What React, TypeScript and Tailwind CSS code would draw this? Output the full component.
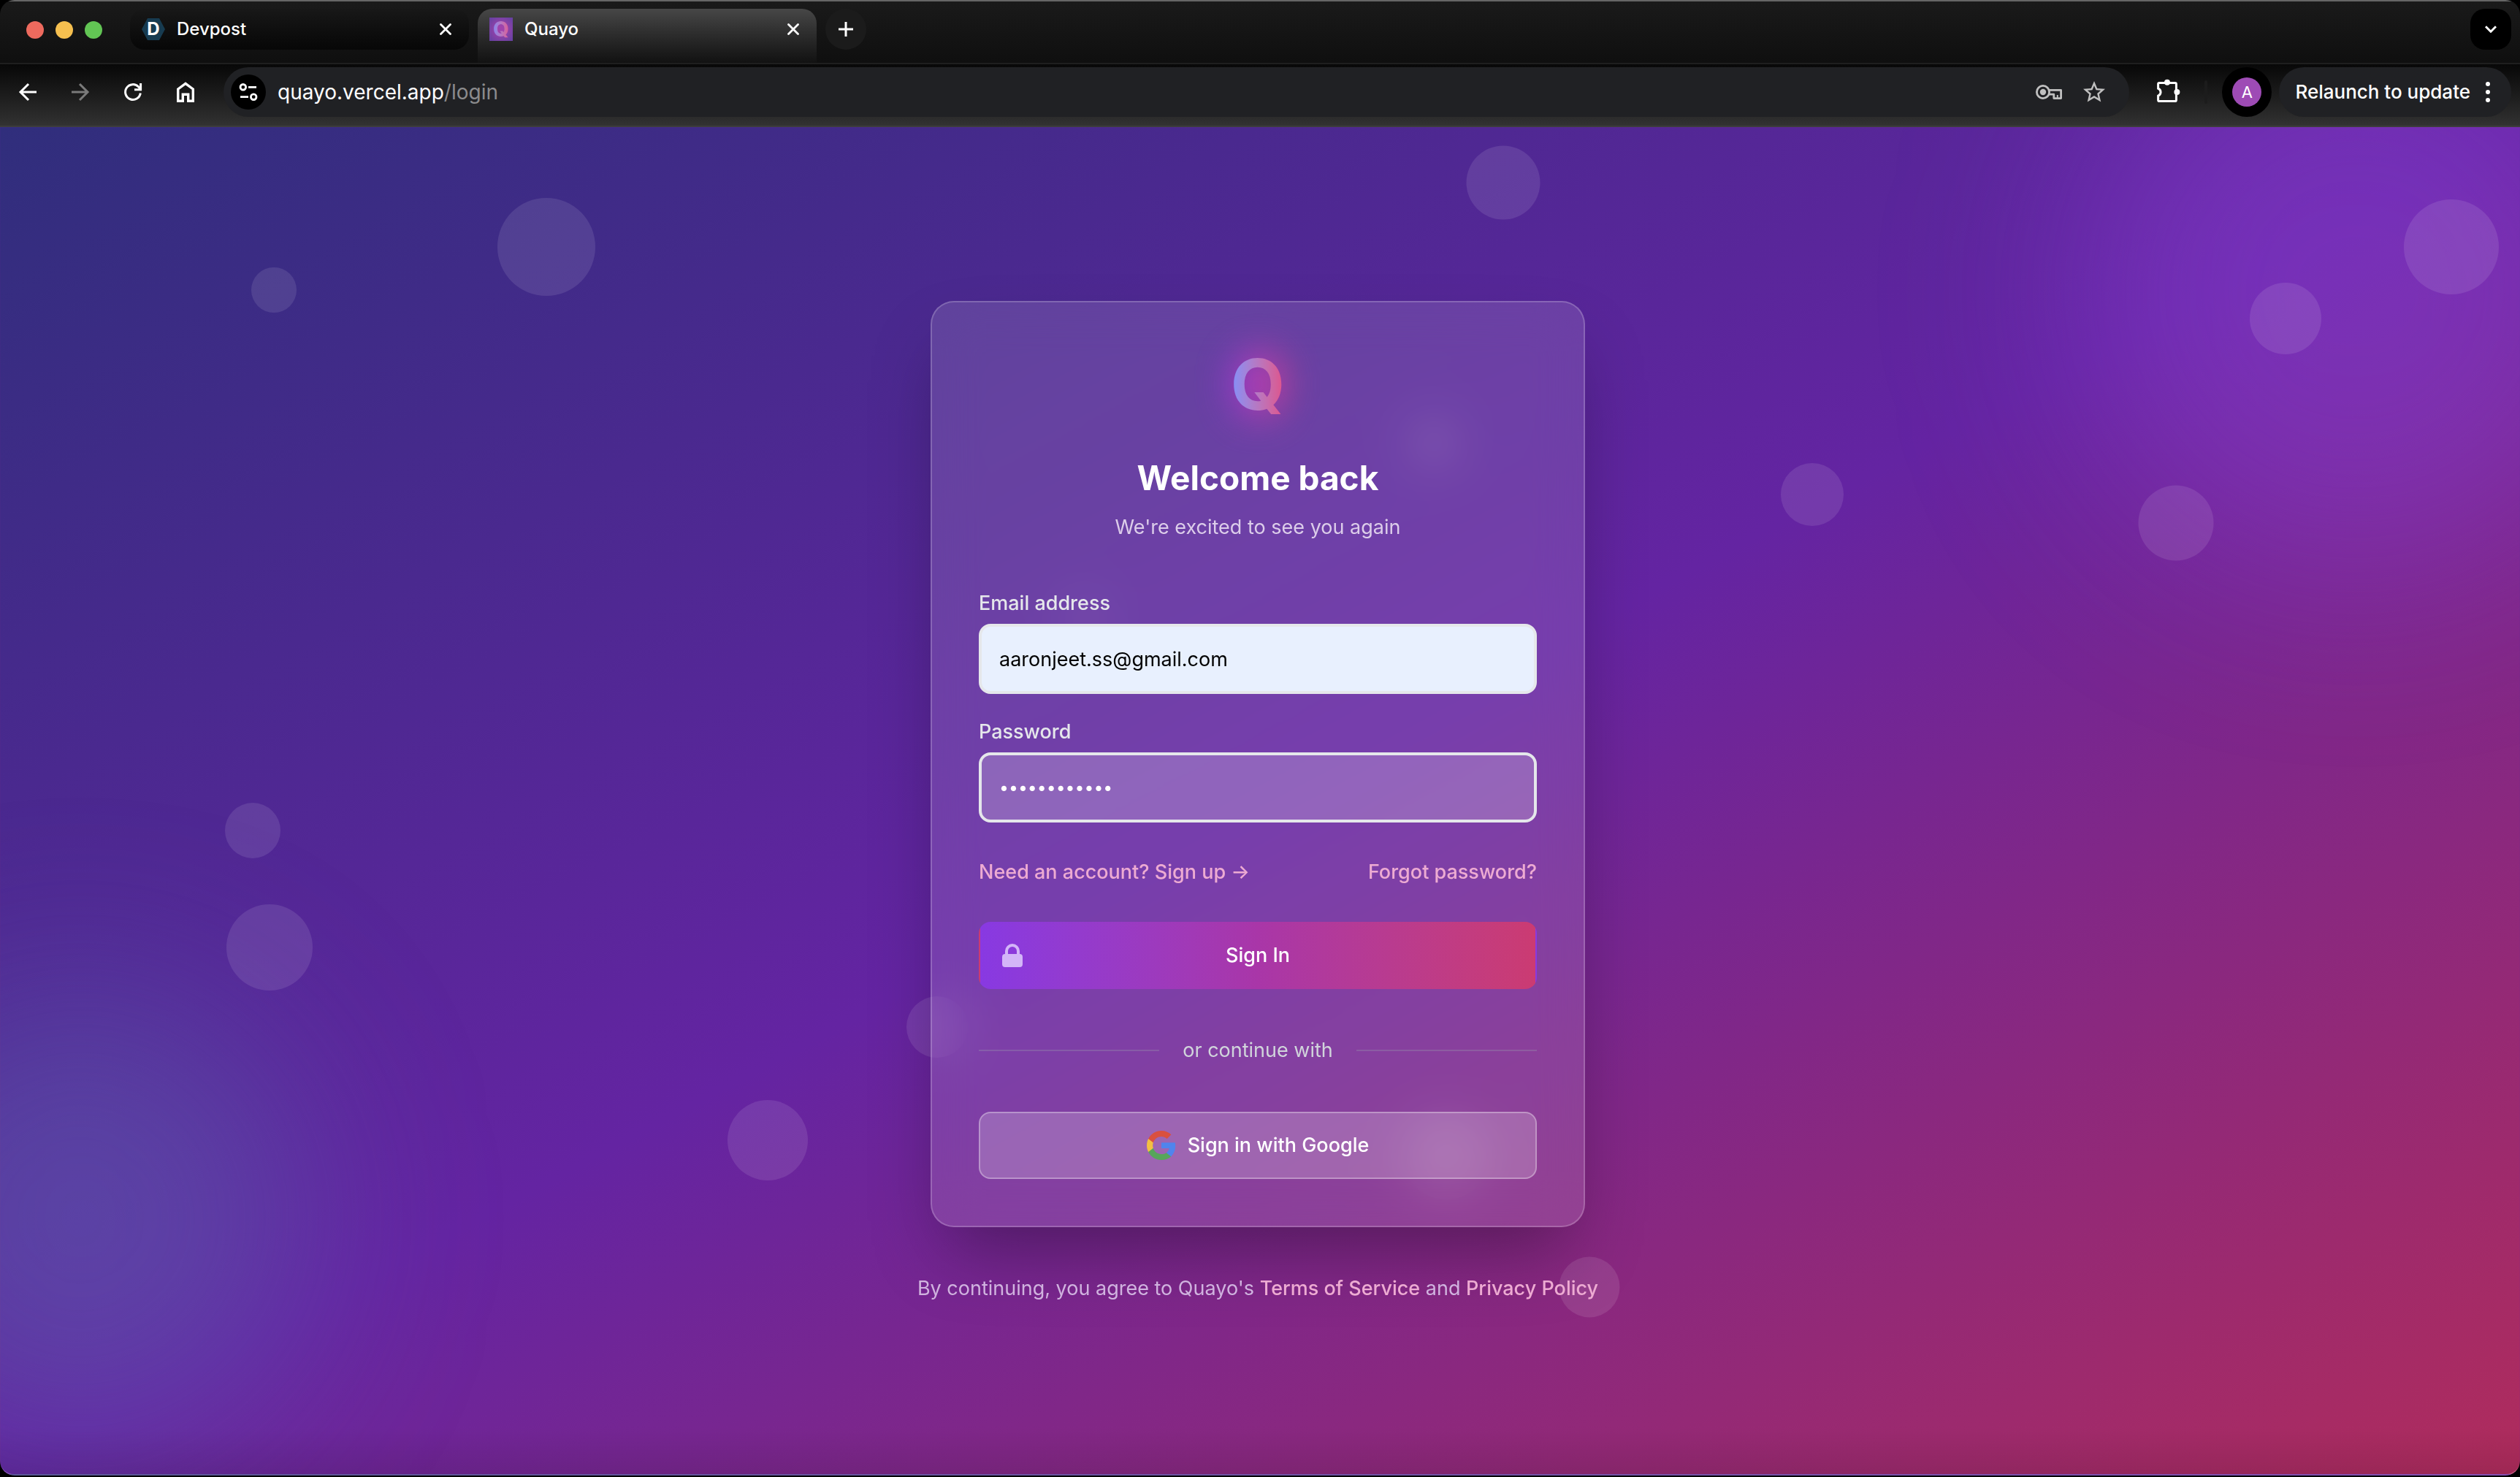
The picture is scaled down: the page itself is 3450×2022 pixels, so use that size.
import React from 'react';

const bubbles = [
    { x: 21.68, y: 8.9, size: 134 },
    { x: 10.87, y: 12.1, size: 62 },
    { x: 59.65, y: 4.1, size: 101 },
    { x: 97.28, y: 8.9, size: 130 },
    { x: 90.7, y: 14.2, size: 98 },
    { x: 71.9, y: 27.3, size: 86 },
    { x: 86.35, y: 29.4, size: 103 },
    { x: 10.04, y: 52.2, size: 76 },
    { x: 10.7, y: 60.9, size: 118 },
    { x: 30.46, y: 75.2, size: 110 },
    { x: 37.2, y: 66.8, size: 84 },
    { x: 63.07, y: 86.1, size: 83 },
    { x: 56.87, y: 23.4, size: 74 },
    { x: 43.1, y: 36.4, size: 52 },
    { x: 57.4, y: 76.4, size: 118 },
];

interface IconProps {
    className?: string;
}

const CloseIcon: React.FC<IconProps> = ({ className }) => (
    <svg className={className} viewBox="0 0 16 16" fill="none" stroke="currentColor" strokeWidth="2.8" strokeLinecap="round">
        <path d="M1.5 1.5l13 13M14.5 1.5l-13 13" />
    </svg>
);

const ArrowIcon: React.FC<IconProps> = ({ className }) => (
    <svg className={className} viewBox="0 0 28 28" fill="none" stroke="currentColor" strokeWidth="3">
        <path d="M26 14H4M15 3L4 14l11 11" />
    </svg>
);

const ReloadIcon: React.FC<IconProps> = ({ className }) => (
    <svg className={className} viewBox="0 0 28 28" fill="none" stroke="currentColor" strokeWidth="3">
        <path d="M24.3 15.5A10.4 10.4 0 1 1 21.5 6.8L24 9.5" />
        <path d="M24.6 2v8.8H16" />
    </svg>
);

const HomeIcon: React.FC<IconProps> = ({ className }) => (
    <svg className={className} viewBox="0 0 28 32" fill="none" stroke="currentColor" strokeWidth="3.4">
        <path d="M3.7 28.3V12L14 4.4 24.3 12v16.3h-6.6v-9h-7.4v9z" />
    </svg>
);

const SiteIcon: React.FC<IconProps> = ({ className }) => (
    <svg className={className} viewBox="0 0 28 28" fill="none" stroke="currentColor" strokeWidth="2.8">
        <circle cx="6.8" cy="7.3" r="3.8" />
        <path d="M14 7.3h11M3 20.7h11" />
        <circle cx="21.2" cy="20.7" r="3.8" />
    </svg>
);

const KeyIcon: React.FC<IconProps> = ({ className }) => (
    <svg className={className} viewBox="0 0 40 24" fill="none" stroke="currentColor" strokeWidth="2.8">
        <circle cx="12" cy="12" r="8.6" />
        <circle cx="12" cy="12" r="4.2" fill="currentColor" stroke="none" />
        <path d="M20 9.4h16.6v11.2h-9.8v-5.4H20" strokeLinejoin="round" />
        <path d="M31.8 16v4" strokeWidth="2" />
    </svg>
);

const StarIcon: React.FC<IconProps> = ({ className }) => (
    <svg className={className} viewBox="0 0 24 24" fill="currentColor">
        <path d="M22 9.24l-7.19-.62L12 2 9.19 8.63 2 9.24l5.46 4.73L5.82 21 12 17.27 18.18 21l-1.63-7.03L22 9.24zM12 15.4l-3.76 2.27 1-4.28-3.32-2.88 4.38-.38L12 6.1l1.71 4.04 4.38.38-3.32 2.88 1 4.28L12 15.4z" />
    </svg>
);

const PuzzleIcon: React.FC<IconProps> = ({ className }) => (
    <svg className={className} viewBox="0 0 36 36" fill="none">
        <path
            d="M4.6 13.2V7a1.6 1.6 0 0 1 1.6-1.6h21.6A1.6 1.6 0 0 1 29.4 7v22a1.6 1.6 0 0 1-1.6 1.6H6.2A1.6 1.6 0 0 1 4.6 29v-5.8c4.6-2 4.6-8 0-10z"
            stroke="currentColor"
            strokeWidth="3"
        />
        <circle cx="17" cy="4.8" r="4" fill="currentColor" />
        <circle cx="30.4" cy="18" r="4" fill="currentColor" />
    </svg>
);

const LockIcon: React.FC<IconProps> = ({ className }) => (
    <svg className={className} viewBox="0 0 20 20" fill="currentColor">
        <path fillRule="evenodd" clipRule="evenodd" d="M5 9V7a5 5 0 0110 0v2a2 2 0 012 2v5a2 2 0 01-2 2H5a2 2 0 01-2-2v-5a2 2 0 012-2zm8-2v2H7V7a3 3 0 016 0z" />
    </svg>
);

const GoogleIcon: React.FC<IconProps> = ({ className }) => (
    <svg className={className} viewBox="2 2 44 44">
        <path fill="#5084ed" d="M45.12 24.5c0-1.56-.14-3.06-.4-4.5H24v8.51h11.84c-.51 2.75-2.06 5.08-4.39 6.64v5.52h7.11c4.16-3.83 6.56-9.47 6.56-16.17z" />
        <path fill="#57a65a" d="M24 46c5.94 0 10.92-1.97 14.56-5.33l-7.11-5.52c-1.97 1.32-4.49 2.1-7.45 2.1-5.73 0-10.58-3.87-12.31-9.07H4.34v5.7C7.96 41.07 15.4 46 24 46z" />
        <path fill="#f2bf42" d="M11.69 28.18C11.25 26.86 11 25.45 11 24s.25-2.86.69-4.18v-5.7H4.34C2.85 17.09 2 20.45 2 24s.85 6.91 2.34 9.88l7.35-5.7z" />
        <path fill="#d9503f" d="M24 10.75c3.23 0 6.13 1.11 8.41 3.29l6.31-6.31C34.91 4.18 29.93 2 24 2 15.4 2 7.96 6.93 4.34 14.12l7.35 5.7c1.73-5.2 6.58-9.07 12.31-9.07z" />
    </svg>
);

const TabStrip: React.FC = () => (
    <div className="flex items-start h-[86px] pt-[10px] pl-9 pr-3 border-t-2 border-[#666666] bg-linear-to-b from-[#1a1a1a] to-[#0f0f0f]">
        <div className="flex items-center gap-4 h-[58px] w-[142px]">
            <span className="size-6 rounded-full bg-[#ed6a5e]" />
            <span className="size-6 rounded-full bg-[#f5bf4f]" />
            <span className="size-6 rounded-full bg-[#62c554]" />
        </div>
        <div className="flex items-center w-[464px] h-14 pl-4 pr-6 rounded-[20px] bg-linear-to-b from-[#181818] to-[#070707]">
            <span className="flex items-center justify-center w-8 h-[30px] bg-[#173b50] text-[24px] leading-none font-bold [clip-path:polygon(25%_0,75%_0,100%_50%,75%_100%,25%_100%,0_50%)]">D</span>
            <span className="ml-4 flex-1 text-[24px] leading-8 font-medium">Devpost</span>
            <button aria-label="Close Devpost tab">
                <CloseIcon className="size-4" />
            </button>
        </div>
        <div className="flex items-start w-[464px] h-[74px] ml-3 pt-3 pl-4 pr-6 rounded-t-[20px] bg-linear-to-b from-[#474747] to-[#121212]">
            <span className="flex items-center justify-center size-8 bg-[radial-gradient(circle,#a042ac_20%,#6841a2_90%)]">
                <span className="text-[28px] leading-none font-extrabold text-transparent bg-clip-text bg-linear-to-r from-[#8687ee] to-[#dc5a93]">Q</span>
            </span>
            <span className="ml-4 flex-1 text-[24px] leading-8 font-medium">Quayo</span>
            <button aria-label="Close Quayo tab" className="mt-2">
                <CloseIcon className="size-4" />
            </button>
        </div>
        <button aria-label="New tab" className="flex items-center justify-center size-14 ml-3 rounded-full bg-[#1b1b1b]">
            <svg className="size-5" viewBox="0 0 20 20" fill="none" stroke="currentColor" strokeWidth="3">
                <path d="M10 0v20M0 10h20" />
            </svg>
        </button>
        <button aria-label="Search tabs" className="flex items-center justify-center size-14 ml-auto rounded-[20px] bg-black">
            <svg className="w-4 h-[10px]" viewBox="0 0 16 10" fill="none" stroke="currentColor" strokeWidth="3">
                <path d="M1 1.2l7 7 7-7" />
            </svg>
        </button>
    </div>
);

const Toolbar: React.FC = () => (
    <div className="flex items-center h-[88px] pb-3 pl-6 pr-3 pt-1 border-y-2 border-t-[#1f1f1f] border-b-[#3c3c3c] bg-linear-to-b from-[#080808] to-[#323232]">
        <div className="flex items-center gap-11">
            <button aria-label="Back">
                <ArrowIcon className="size-7" />
            </button>
            <button aria-label="Forward" className="text-[#7a7a7a]">
                <ArrowIcon className="size-7 rotate-180" />
            </button>
            <button aria-label="Reload">
                <ReloadIcon className="size-7" />
            </button>
            <button aria-label="Home">
                <HomeIcon className="w-7 h-8" />
            </button>
        </div>
        <div className="flex flex-1 items-center h-[68px] ml-[38px] pl-[10px] pr-[30px] rounded-full bg-[#202124]">
            <button aria-label="Site information" className="flex items-center justify-center size-12 rounded-full bg-black">
                <SiteIcon className="size-7" />
            </button>
            <span className="ml-4 flex-1 text-[28px] leading-8">
                quayo.vercel.app<span className="text-[#8b8b8d]">/login</span>
            </span>
            <div className="flex items-center gap-6 text-[#c0c0c0]">
                <button aria-label="Passwords">
                    <KeyIcon className="w-10 h-6" />
                </button>
                <button aria-label="Bookmark this page">
                    <StarIcon className="size-9" />
                </button>
            </div>
        </div>
        <button aria-label="Extensions" className="ml-[35px]">
            <PuzzleIcon className="size-9" />
        </button>
        <span className="w-1 h-8 ml-8 rounded-full bg-[#1c1c1c]" />
        <button aria-label="Profile" className="flex items-center justify-center size-[68px] ml-5 rounded-full bg-black">
            <span className="flex items-center justify-center size-10 rounded-full bg-[#9e4bb5] text-[22px] leading-none">A</span>
        </button>
        <button className="flex items-center gap-5 h-[68px] ml-[10px] pl-[22px] pr-7 rounded-full bg-[#202124] text-[26px] leading-8 font-medium">
            Relaunch to update
            <svg className="w-2 h-8" viewBox="0 0 8 32" fill="currentColor">
                <circle cx="4" cy="5" r="3" />
                <circle cx="4" cy="16" r="3" />
                <circle cx="4" cy="27" r="3" />
            </svg>
        </button>
    </div>
);

const Backdrop: React.FC = () => (
    <div className="absolute inset-0 overflow-hidden" aria-hidden="true">
        <div className="absolute -top-[160px] -right-[160px] size-[768px] rounded-full bg-[#9a4be8]/32 blur-[128px]" />
        <div className="absolute bottom-10 -left-[200px] size-[620px] rounded-full bg-[#5a80b8]/32 blur-[128px]" />
        <div className="absolute inset-x-0 bottom-0 h-16 bg-linear-to-t from-black/10 to-transparent" />
        {bubbles.map((b, i) => (
            <div
                key={i}
                className="absolute -translate-x-1/2 -translate-y-1/2 rounded-full bg-white/10"
                style={{ left: `${b.x}%`, top: `${b.y}%`, width: b.size, height: b.size }}
            />
        ))}
    </div>
);

const LoginCard: React.FC = () => (
    <div className="w-full max-w-[896px] p-16 rounded-[32px] border-2 border-white/20 bg-white/12 backdrop-blur-[32px] shadow-[0_50px_100px_-24px_rgba(0,0,0,0.35)]">
        {/* Header */}
        <div className="flex flex-col items-center text-center">
            <div className="relative">
                <div className="absolute inset-0 rounded-full bg-linear-to-r from-[#9333dd] to-[#d63c86] opacity-90 blur-[24px]" />
                <span className="relative block text-[96px] leading-[96px] font-bold text-transparent bg-clip-text bg-linear-to-r from-[#8090fa] to-[#e05088]">Q</span>
            </div>
            <h1 className="mt-12 text-[46px] leading-[64px] font-bold">Welcome back</h1>
            <p className="mt-4 text-[27px] leading-10 text-[#dccdea]">We're excited to see you again</p>
        </div>

        {/* Form */}
        <form className="mt-16" onSubmit={(e) => e.preventDefault()}>
            <label htmlFor="email" className="block text-[27px] leading-10 font-medium text-[#e5e7eb]">Email address</label>
            <input
                id="email"
                type="email"
                defaultValue="aaronjeet.ss@gmail.com"
                className="block w-full h-24 mt-2 px-6 rounded-2xl border-4 border-[#e5e7eb] bg-[#e8f0fe] text-[27px] text-black outline-none"
            />
            <label htmlFor="password" className="block mt-8 text-[27px] leading-10 font-medium text-[#e5e7eb]">Password</label>
            <input
                id="password"
                type="password"
                defaultValue="quayoquayo12"
                className="block w-full h-24 mt-2 px-6 rounded-2xl border-4 border-[#e5e7eb] bg-white/20 text-[23px] text-white outline-none"
            />
            <div className="flex items-center justify-between mt-12 text-[27px] leading-10 font-medium text-[#edabd2]">
                <a href="#signup">Need an account? Sign up →</a>
                <a href="#forgot">Forgot password?</a>
            </div>
            <button
                type="submit"
                className="relative flex items-center justify-center w-full h-[92px] mt-12 rounded-2xl border-2 border-transparent bg-linear-to-r from-[#8839e2] via-[#a936a8] to-[#cb3b72] text-[27px] font-medium"
            >
                <span className="absolute inset-y-0 left-0 flex items-center pl-6">
                    <LockIcon className="size-10 text-[#d3b5f8]" />
                </span>
                Sign In
            </button>
        </form>

        <div className="flex items-center gap-8 mt-16 text-[27px] leading-10 text-[#d1d5db]">
            <span className="flex-1 h-[2px] bg-[#9ca3af]/30" />
            or continue with
            <span className="flex-1 h-[2px] bg-[#9ca3af]/30" />
        </div>

        <button className="flex items-center justify-center gap-4 w-full h-[92px] mt-16 rounded-2xl border-2 border-white/30 bg-white/20 text-[27px] font-medium">
            <GoogleIcon className="size-10" />
            Sign in with Google
        </button>
    </div>
);

const App: React.FC = () => (
    <div className="min-h-screen bg-black font-['Inter','Liberation_Sans',sans-serif] text-white">
        <div className="flex flex-col min-h-screen overflow-hidden rounded-[20px] border-b-2 border-black">
            <TabStrip />
            <Toolbar />
            <main className="relative flex flex-1 flex-col items-center justify-center pt-1 pr-[6px] rounded-b-[20px] overflow-hidden border-b-2 border-white/20 bg-linear-to-br/srgb from-[#302e7c] via-[#6424a2] to-[#b02c5c]">
                <Backdrop />
                <LoginCard />
                <p className="relative mt-16 text-[27px] leading-10 text-[#d0b3df]">
                    By continuing, you agree to Quayo's{' '}
                    <a href="#terms" className="font-medium text-[#edabd2]">Terms of Service</a> and{' '}
                    <a href="#privacy" className="font-medium text-[#edabd2]">Privacy Policy</a>
                </p>
            </main>
        </div>
    </div>
);

export default App;
